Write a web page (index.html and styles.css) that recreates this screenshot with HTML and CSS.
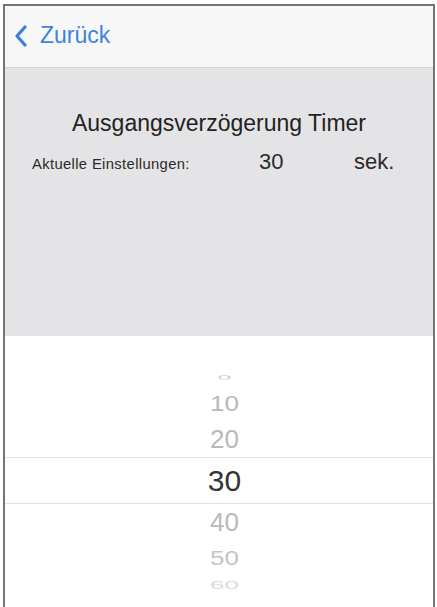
FILE: index.html
```html
<!DOCTYPE html>
<html lang="de">
<head>
<meta charset="utf-8">
<title>Ausgangsverzögerung Timer</title>
<link rel="stylesheet" href="styles.css">
</head>
<body>
<div class="frame">
  <header class="nav">
    <a class="back">
      <svg class="chev" width="14" height="22" viewBox="0 0 14 22"><path d="M11 2 L3 11 L11 20" fill="none" stroke="#3a7fdc" stroke-width="3.2" stroke-linecap="round" stroke-linejoin="round"/></svg>
      <span>Zurück</span>
    </a>
  </header>
  <section class="panel">
    <h1 class="title">Ausgangsverzögerung Timer</h1>
    <div class="current">
      <span class="label">Aktuelle Einstellungen:</span>
      <span class="value">30</span>
      <span class="unit">sek.</span>
    </div>
  </section>
  <section class="picker">
    <div class="spacer"></div>
    <div class="item i0"><span>0</span></div>
    <div class="item i10"><span>10</span></div>
    <div class="item i20"><span>20</span></div>
    <div class="item sel"><span>30</span></div>
    <div class="item i40"><span>40</span></div>
    <div class="item i50"><span>50</span></div>
    <div class="item i60"><span>60</span></div>
  </section>
</div>
</body>
</html>
```
FILE: styles.css
```css
html, body {
  margin: 0;
  padding: 0;
  background: #ffffff;
  font-family: "Liberation Sans", Arial, sans-serif;
  overflow: hidden;
}
.frame {
  margin: 4px 2px 0 3px;
  border: 2px solid #747474;
  border-bottom: none;
  height: 620px;
  box-sizing: border-box;
  display: flex;
  flex-direction: column;
  background: #fff;
}
.nav {
  height: 61px;
  flex: none;
  background: #f7f7f8;
  border-bottom: 1px solid #d2d2d4;
  display: flex;
  align-items: center;
  padding-left: 9px;
}
.back {
  display: flex;
  align-items: center;
  gap: 12px;
  color: #3f83de;
  font-size: 23px;
  padding-bottom: 2px;
}
.chev { display: block; }
.panel {
  height: 268px;
  flex: none;
  background: #e4e4e6;
  box-sizing: border-box;
  padding-top: 42px;
}
.title {
  margin: 0;
  font-weight: normal;
  font-size: 23px;
  line-height: 26px;
  text-align: center;
  color: #222;
}
.current {
  margin-top: 13px;
  display: flex;
  align-items: baseline;
  padding-left: 27px;
  line-height: 26px;
  color: #2a2a2a;
}
.label {
  width: 227px;
  font-size: 14.8px;
  letter-spacing: 0.35px;
}
.value {
  width: 95px;
  font-size: 22px;
}
.unit {
  font-size: 22px;
}
.picker {
  flex: 1;
  background: #fff;
  display: flex;
  flex-direction: column;
}
.spacer { height: 34px; flex: none; }
.item {
  flex: none;
  display: flex;
  align-items: center;
  justify-content: center;
  color: #b9b9b9;
  font-size: 26px;
  line-height: 1;
  padding-left: 11px;
}
.item span { display: block; }
.i0 { height: 16px; color: #cfcfcf; font-size: 24px; }
.i0 span { transform: scaleY(0.3); }
.i10 { height: 35px; }
.i10 span { transform: scaleY(0.82); }
.i20 { height: 36px; }
.sel {
  height: 47px;
  border-top: 1px solid #e2e2e2;
  border-bottom: 1px solid #e2e2e2;
  box-sizing: border-box;
  color: #333;
  font-size: 30px;
}
.i40 { height: 36px; }
.i50 { height: 36px; color: #c4c4c4; }
.i50 span { transform: scaleY(0.8); }
.i60 { height: 18px; color: #dadada; }
.i60 span { transform: scaleY(0.42); }
```
